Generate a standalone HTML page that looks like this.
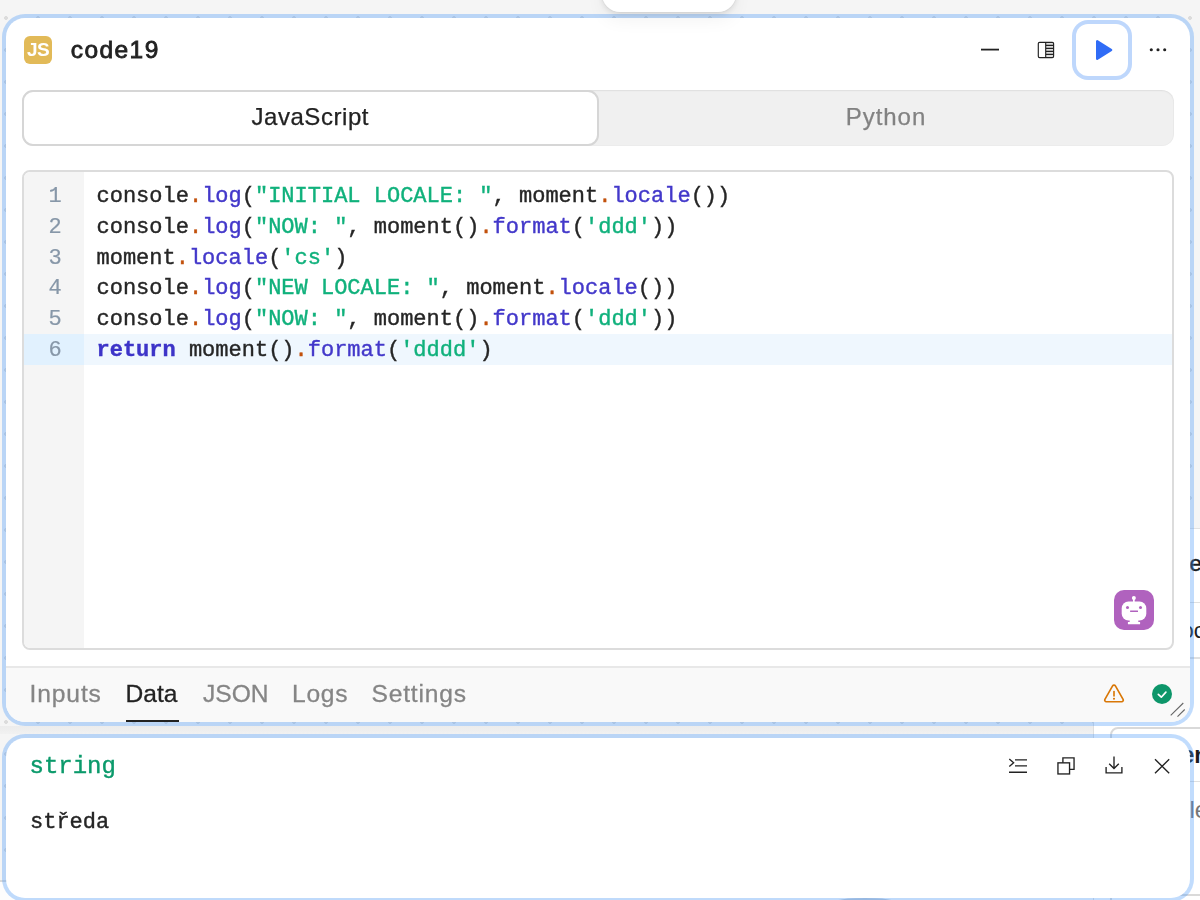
<!DOCTYPE html>
<html lang="en">
<head>
<meta charset="utf-8">
<title>code19</title>
<style>
*{box-sizing:border-box;margin:0;padding:0}
html,body{width:1200px;height:900px;overflow:hidden}
body{position:relative;background-color:#f5f5f5;font-family:"Liberation Sans",sans-serif;color:#222;
background-image:radial-gradient(circle at 2px 2px,#dcdcdc 1.6px,rgba(220,220,220,0) 2.2px);background-size:32px 32px;background-position:4px 16px;}
.abs{position:absolute}
/* underlying page bits */
#pill{left:602px;top:-30px;width:134px;height:42px;background:#fff;border-radius:18px;box-shadow:0 2px 6px rgba(0,0,0,.10),0 8px 18px rgba(0,0,0,.05),0 0 0 1px rgba(0,0,0,.03)}
#side{left:1093px;top:528px;width:110px;height:380px;background:#fff;border-left:1px solid #dedede;border-top:1px solid #e2e2e2}
#gapgray{left:0;top:726px;width:1093px;height:8px;background:linear-gradient(#ececec,#f1f1f1)}
#side .ln{position:absolute;left:0;right:0;height:1px;background:#e0e0e0}
#side .card{position:absolute;left:16px;top:198px;width:120px;height:200px;border:2px solid #d9d9d9;border-radius:8px;background:#fff}
#side .t{position:absolute;font-size:22px;color:#1b1b1b;white-space:nowrap}
/* panels */
.panel{will-change:transform;background:#fff;border-radius:19px;box-shadow:0 0 0 4px rgba(66,150,250,.33)}
#p1{left:6px;top:18px;width:1184px;height:704px;overflow:hidden}
#p2{left:6px;top:738px;width:1184px;height:160px}
#jsicon{left:18px;top:18px;width:28px;height:28px;border-radius:6px;background:#e2ba58;color:#fff;font-weight:bold;font-size:19px;line-height:28px;text-align:center;letter-spacing:-.6px}
#title{left:64.700px;top:16.500px;font-size:24.500px;line-height:30px;color:#222;white-space:nowrap;letter-spacing:1.450px;-webkit-text-stroke:.8px #222}
#runbtn{left:1070px;top:6px;width:52px;height:52px;border-radius:12px;background:#fff;box-shadow:0 0 0 4px rgba(59,135,246,.33)}
#tabs{left:16px;top:72px;width:1152px;height:56px;border-radius:12px;background:#f0f0f0;box-shadow:inset 0 1px 2px rgba(0,0,0,.06),inset 0 0 0 1px rgba(0,0,0,.015)}
#tabjs{left:0;top:0;width:576.5px;height:56px;border-radius:11px;background:#fff;border:2px solid #d6d6d6;font-size:24px;line-height:50px;text-align:center;color:#222;letter-spacing:.55px;-webkit-text-stroke:.25px #222}
#tabpy{left:576px;top:0;width:576px;height:56px;font-size:24px;line-height:53px;text-align:center;color:#828282;letter-spacing:.95px;-webkit-text-stroke:.25px #828282}
#editor{left:16px;top:152px;width:1152px;height:480px;border:2px solid #dcdcdc;border-radius:8px;background:#fff;overflow:hidden}
#gutter{left:0;top:0;width:60px;height:100%;background:#f5f5f5}
.code{font-family:"Liberation Mono",monospace;font-size:22px;line-height:30.8px;white-space:pre;-webkit-text-stroke:.4px currentColor}
#nums{-webkit-text-stroke:.2px currentColor;left:0;top:10px;width:60px;color:#8797a8;text-align:right;padding-right:22.2px}
#active{left:0;top:162px;width:100%;height:30.8px;background:#eff7fe}
#activeg{left:0;top:162px;width:60px;height:30.8px;background:#e1f1fe}
#src{left:72.5px;top:10px;color:#262626}
.p{color:#c2510c}.f{color:#4338ca}.s{color:#10b17c}.k{color:#3d34c8;font-weight:bold}
#bot{width:40px;height:40px}
#bar{left:0;top:648px;width:1184px;height:56px;background:#f9f9f9;border-top:2px solid #e8e8e8}
#bar span{-webkit-text-stroke:.3px currentColor;position:absolute;top:11px;font-size:24.6px;line-height:30px;color:#858585;white-space:nowrap}
#bar span.on{color:#222}
#uline{left:119.500px;top:51.500px;width:53.500px;height:2.500px;background:#222}
#type{left:23.5px;top:11.5px;font-size:24px;line-height:34px;color:#0b9a6b}
#val{left:24px;top:68px;font-size:22px;line-height:34px;color:#252525}
svg{position:absolute;overflow:visible}
</style>
</head>
<body>
<div id="gapgray" class="abs"></div>
<div class="abs" style="left:0;top:880px;width:1093px;height:20px;background:#fdfdfd;border-top:2px solid #d9d9d9"></div>
<div class="abs" style="left:834px;top:898px;width:62px;height:8px;border-radius:50%;background:#5f7596;opacity:.38"></div>
<div id="side" class="abs">
  <div class="ln" style="top:73px"></div><div class="ln" style="top:128px;height:2px"></div>
  <div class="card"></div>
  <div class="t" style="left:95.5px;top:22px;-webkit-text-stroke:.4px #1b1b1b">e</div>
  <div class="t" style="left:87.500px;top:88.500px">oc</div>
  <div class="ln" style="top:251.500px;left:18px"></div><div class="ln" style="top:365px;height:2px;background:#dadada"></div>
  <div class="t" style="left:87.5px;top:213px;font-size:23px;font-weight:bold">en</div>
  <div class="t" style="left:95.5px;top:267px;font-size:24px;color:#777">le</div>
</div>

<div id="p1" class="abs panel">
  <div id="jsicon" class="abs">JS</div>
  <div id="title" class="abs">code19</div>
  <svg style="left:0;top:0" width="1184" height="70">
    <path d="M975 31.6h18" stroke="#222" stroke-width="1.8" fill="none"/>
    <g stroke="#222" stroke-width="1.15" fill="none">
      <rect x="1039.700" y="24.300" width="7.900" height="15.300" fill="#dedede" stroke="none"/><rect x="1032.3" y="24.3" width="15.3" height="15.3" rx="1.3"/>
      <path d="M1039.7 24.3v15.3M1039.7 27.3h7.9M1039.7 30.3h7.9M1039.7 33.3h7.9M1039.7 36.3h7.9"/>
    </g>
    <g fill="#222"><circle cx="1145.3" cy="31.8" r="1.55"/><circle cx="1152" cy="31.8" r="1.55"/><circle cx="1158.7" cy="31.8" r="1.55"/></g>
  </svg>
  <div id="runbtn" class="abs"></div>
  <svg style="left:0;top:0" width="1184" height="70"><path d="M1091.2 23.3v17.4l13.9-8.700z" fill="#306cf6" stroke="#306cf6" stroke-width="2.4" stroke-linejoin="round"/></svg>

  <div id="tabs" class="abs">
    <div id="tabjs" class="abs">JavaScript</div>
    <div id="tabpy" class="abs">Python</div>
  </div>

  <div id="editor" class="abs">
    <div id="gutter" class="abs"></div>
    <div id="active" class="abs"></div>
    <div id="activeg" class="abs"></div>
    <div id="nums" class="abs code">1
2
3
4
5
6</div>
    <div id="src" class="abs code">console<span class="p">.</span><span class="f">log</span>(<span class="s">"INITIAL LOCALE: "</span>, moment<span class="p">.</span><span class="f">locale</span>())
console<span class="p">.</span><span class="f">log</span>(<span class="s">"NOW: "</span>, moment()<span class="p">.</span><span class="f">format</span>(<span class="s">'ddd'</span>))
moment<span class="p">.</span><span class="f">locale</span>(<span class="s">'cs'</span>)
console<span class="p">.</span><span class="f">log</span>(<span class="s">"NEW LOCALE: "</span>, moment<span class="p">.</span><span class="f">locale</span>())
console<span class="p">.</span><span class="f">log</span>(<span class="s">"NOW: "</span>, moment()<span class="p">.</span><span class="f">format</span>(<span class="s">'ddd'</span>))
<span class="k">return</span> moment()<span class="p">.</span><span class="f">format</span>(<span class="s">'dddd'</span>)</div>
    <svg id="bot" style="left:1090px;top:418px" width="40" height="40" viewBox="0 0 40 40">
      <rect width="40" height="40" rx="10" fill="#b062be"/>
      <g fill="#fff"><circle cx="19.850" cy="7.9" r="2"/><rect x="19" y="8" width="1.7" height="5"/>
      <rect x="7.7" y="11.6" width="24.600" height="18.900" rx="6.800" ry="6.800"/><rect x="15.700" y="29.500" width="8.600" height="3.500"/><rect x="13.900" y="32" width="12.200" height="2.300" rx=".3"/></g>
      <g fill="#b062be"><circle cx="13.500" cy="17.600" r="1.500"/><circle cx="26.500" cy="17.600" r="1.500"/><rect x="16.100" y="20.500" width="7.900" height="1.500" rx=".3"/></g>
    </svg>
  </div>

  <div id="bar" class="abs">
    <span style="left:23.5px;letter-spacing:.88px">Inputs</span><span class="on" style="left:119.5px">Data</span><span style="left:197px">JSON</span><span style="left:286px;letter-spacing:.7px">Logs</span><span style="left:365.5px;letter-spacing:.82px">Settings</span>
    <div id="uline" class="abs"></div>
    <svg style="left:0;top:0" width="1184" height="56">
      <g stroke="#d97706" stroke-width="1.650" fill="none" stroke-linejoin="round" stroke-linecap="round">
        <path d="M1106.600 17.900l-7.700 13.400a1.600 1.600 0 0 0 1.400 2.400h15.400a1.600 1.600 0 0 0 1.400-2.400l-7.700-13.400a1.620 1.620 0 0 0-2.800 0z"/>
        <path d="M1108 23.600v4.300"/></g>
      <circle cx="1108" cy="30.800" r="1.050" fill="#d97706"/>
      <circle cx="1156" cy="26" r="10" fill="#0d966a"/>
      <path d="M1152.300 26.300l3 2.900 4.600-5.100" stroke="#fff" stroke-width="1.650" fill="none" stroke-linecap="round" stroke-linejoin="round"/>
      <path d="M1164.700 47.300l12.600-12.300M1171.500 48.700l7.200-7.200" stroke="#666" stroke-width="1.100" fill="none"/>
    </svg>
  </div>
</div>

<div id="pill" class="abs"></div>
<div id="p2" class="abs panel">
  <div id="type" class="abs code" style="font-size:24px">string</div>
  <div id="val" class="abs code">středa</div>
  <svg style="left:0;top:0" width="1184" height="60">
    <g transform="translate(0,.5)" stroke="#222" stroke-width="1.350" fill="none" stroke-linecap="butt" stroke-linejoin="miter">
      <path d="M1003.300 20.600l4.300 3.700-4.300 3.600M1009 21.300h12M1009 27.300h12M1003 33.750h18"/>
      <rect x="1051.950" y="24.350" width="11.600" height="11.100"/><path d="M1056.900 24.350v-4.950h11.150v11.450h-4.500"/>
      <path d="M1108 18v12M1103.200 25.200l4.800 4.800 4.800-4.800M1100.100 28.500v5.800h15.800v-5.800"/>
      <path d="M1149 20.700l14.200 14.100M1163.200 20.700l-14.200 14.100"/>
    </g>
  </svg>
</div>
</body>
</html>
